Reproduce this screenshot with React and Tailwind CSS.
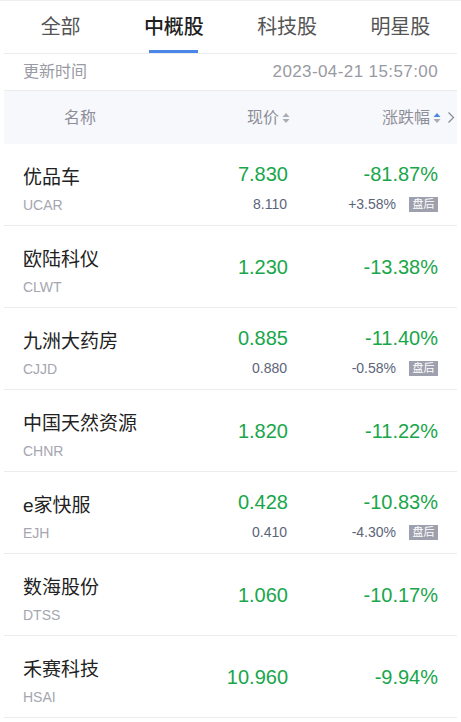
import React from 'react';

const tabs = ['全部', '中概股', '科技股', '明星股'];

const stocks = [
    { name: '优品车', code: 'UCAR', price: '7.830', pct: '-81.87%', sub: { price: '8.110', pct: '+3.58%' } },
    { name: '欧陆科仪', code: 'CLWT', price: '1.230', pct: '-13.38%' },
    { name: '九洲大药房', code: 'CJJD', price: '0.885', pct: '-11.40%', sub: { price: '0.880', pct: '-0.58%' } },
    { name: '中国天然资源', code: 'CHNR', price: '1.820', pct: '-11.22%' },
    { name: 'e家快服', code: 'EJH', price: '0.428', pct: '-10.83%', sub: { price: '0.410', pct: '-4.30%' } },
    { name: '数海股份', code: 'DTSS', price: '1.060', pct: '-10.17%' },
    { name: '禾赛科技', code: 'HSAI', price: '10.960', pct: '-9.94%' },
];

const SortIcon = ({ active }) => (
    <svg width="8" height="12" viewBox="0 0 8 12" className="ml-[3px]">
        <path d="M4 1 L7.5 5 H0.5 Z" fill={active ? '#4a86e8' : '#a9abb5'} />
        <path d="M4 11 L7.5 7 H0.5 Z" fill="#a9abb5" />
    </svg>
);

const StockRow = ({ stock }) => {
    return (
        <div className="flex h-[82px] border-b border-[#ececef]">
            <div className="flex-1 pl-[19px] pt-[21px] flex flex-col">
                <span className="text-[19px] leading-[26px] text-[#222]">{stock.name}</span>
                <span className="mt-[5px] text-[14px] leading-[18px] text-[#a5a6b0]">{stock.code}</span>
            </div>
            {stock.sub ? (
                <>
                    <div className="w-[120px] flex flex-col items-end pt-[18px]">
                        <span className="text-[20px] leading-[24px] text-[#19a64a]">{stock.price}</span>
                        <span className="mt-[9px] mr-[1px] text-[14px] leading-[18px] text-[#5c6478]">{stock.sub.price}</span>
                    </div>
                    <div className="w-[169px] pr-[19px] flex flex-col items-end pt-[18px]">
                        <span className="text-[20px] leading-[24px] text-[#19a64a]">{stock.pct}</span>
                        <div className="mt-[9px] h-[18px] flex items-center">
                            <span className="text-[14px] leading-[18px] text-[#5c6478]">{stock.sub.pct}</span>
                            <span className="ml-[13px] w-[29px] h-[15px] bg-[#9fa0ae] text-white text-[11px] leading-[15px] text-center">盘后</span>
                        </div>
                    </div>
                </>
            ) : (
                <>
                    <div className="w-[120px] flex items-center justify-end">
                        <span className="text-[20px] leading-[24px] text-[#19a64a]">{stock.price}</span>
                    </div>
                    <div className="w-[169px] pr-[19px] flex items-center justify-end">
                        <span className="text-[20px] leading-[24px] text-[#19a64a]">{stock.pct}</span>
                    </div>
                </>
            )}
        </div>
    );
};

const App = () => {
    return (
        <div
            className="w-[461px] h-[722px] bg-white overflow-hidden border-t border-[#efeff2]"
            style={{ fontFamily: '"Liberation Sans", "Noto Sans CJK SC", sans-serif' }}
        >
            <div className="px-[4px]">
                <div className="flex h-[53px] border-b border-[#ececef]">
                    {tabs.map((tab, i) => (
                        <div key={tab} className="flex-1 flex flex-col items-center pt-[13px]">
                            <span className={`text-[20px] leading-[26px] ${i === 1 ? 'text-[#1f1f1f] font-medium' : 'text-[#555]'}`}>
                                {tab}
                            </span>
                            {i === 1 && <div className="mt-auto w-[49px] h-[3px] bg-[#4a86e8]" />}
                        </div>
                    ))}
                </div>

                <div className="flex items-center justify-between h-[37px] border-b border-[#ececef] pl-[19px] pr-[19px]">
                    <span className="text-[16px] text-[#999aa3]">更新时间</span>
                    <span className="text-[17px] tracking-[0.4px] text-[#999aa3]">2023-04-21 15:57:00</span>
                </div>

                <div className="flex items-center h-[53px] bg-[#f7f8fb] text-[16px] text-[#8d8e99]">
                    <div className="flex-1 pl-[60px]">名称</div>
                    <div className="w-[122px] flex items-center justify-end">
                        现价
                        <SortIcon />
                    </div>
                    <div className="w-[167px] flex items-center justify-end pr-[2px]">
                        涨跌幅
                        <SortIcon active />
                        <svg width="8" height="13" viewBox="0 0 8 13" className="ml-[6px]">
                            <path d="M1.5 1.5 L6.5 6.5 L1.5 11.5" fill="none" stroke="#8d8e99" strokeWidth="1.3" />
                        </svg>
                    </div>
                </div>

                {stocks.map((stock) => (
                    <StockRow key={stock.code} stock={stock} />
                ))}
            </div>
        </div>
    );
};

export default App;
